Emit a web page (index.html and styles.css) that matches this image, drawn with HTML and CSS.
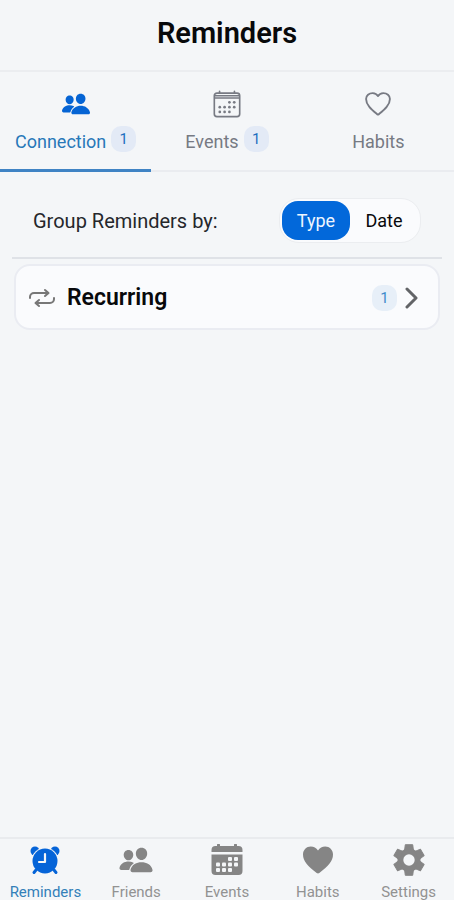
FILE: index.html
```html
<!DOCTYPE html>
<html lang="en">
<head>
<meta charset="utf-8">
<meta name="viewport" content="width=device-width, initial-scale=1">
<title>Reminders</title>
<link rel="stylesheet" href="styles.css">
</head>
<body>
<svg class="sprite" aria-hidden="true">
  <symbol id="people" viewBox="0 0 512 512">
    <path d="M336 256c-20.56 0-40.44-9.18-56-25.84-15.13-16.25-24.37-37.92-26-61-1.74-24.62 5.77-47.26 21.14-63.76S312 80 336 80c23.83 0 45.38 9.06 60.7 25.52 15.47 16.62 23 39.22 21.26 63.63-1.67 23.11-10.9 44.77-26 61C376.44 246.82 356.57 256 336 256zM467.83 432H204.18a27.71 27.71 0 01-22-10.67 30.22 30.22 0 01-5.26-25.79c8.42-33.81 29.28-61.85 60.32-81.08C264.79 297.4 299.86 288 336 288c36.85 0 71 9 98.71 26.05 31.11 19.13 52 47.33 60.38 81.55a30.27 30.27 0 01-5.32 25.78A27.68 27.68 0 01467.83 432zM147 260c-35.19 0-66.13-32.72-69-72.93-1.42-20.6 5-39.65 18-53.62 12.86-13.83 31-21.45 51-21.45s38 7.66 50.93 21.57c13.1 14.08 19.5 33.09 18 53.52-2.87 40.2-33.8 72.91-68.93 72.91zm65.66 31.45c-17.59-8.6-40.42-12.9-65.65-12.9-29.46 0-58.07 7.68-80.57 21.62C40.93 316 23.77 339.05 16.84 366.88a27.39 27.39 0 004.79 23.36A25.32 25.32 0 0041.72 400h111a8 8 0 007.87-6.57c.11-.63.25-1.26.41-1.88 8.48-34.06 28.35-62.84 57.71-83.82a8 8 0 00-.63-13.39c-1.57-.92-3.37-1.89-5.42-2.89z" fill="currentColor"/>
  </symbol>
</svg>

<div class="app">
  <header class="header"><h1>Reminders</h1></header>

  <div class="tabs" role="tablist">
    <button class="tab tab-active" type="button" role="tab" aria-selected="true">
      <svg class="tab-icon" viewBox="16 16 480 480" aria-hidden="true"><use href="#people" width="512" height="512"/></svg>
      <span class="tab-label">Connection <span class="badge badge-raised">1</span></span>
    </button>
    <button class="tab" type="button" role="tab" aria-selected="false">
      <svg class="tab-icon" viewBox="0 0 512 512" fill="none" stroke="currentColor" stroke-width="30" stroke-linecap="round" aria-hidden="true">
        <rect x="24" y="56" width="464" height="432" rx="48"/>
        <path d="M120 24v32M392 24v32M32 106h448M32 146h448"/>
        <g fill="currentColor" stroke="none">
          <circle cx="300" cy="226" r="25"/><circle cx="388" cy="226" r="25"/>
          <circle cx="124" cy="314" r="25"/><circle cx="212" cy="314" r="25"/><circle cx="300" cy="314" r="25"/><circle cx="388" cy="314" r="25"/>
          <circle cx="124" cy="402" r="25"/><circle cx="212" cy="402" r="25"/><circle cx="300" cy="402" r="25"/>
        </g>
      </svg>
      <span class="tab-label">Events <span class="badge badge-raised">1</span></span>
    </button>
    <button class="tab" type="button" role="tab" aria-selected="false">
      <svg class="tab-icon" viewBox="0 0 512 512" fill="none" stroke="currentColor" stroke-width="34" stroke-linejoin="round" aria-hidden="true">
        <path d="M352.92 56C288 56 256 112 256 112s-32-56-96.92-56C92 56 38.500 104 38 164c-1 110 105 195 209 284a16 16 0 0018 0c104-89 210-174 209-284-.5-60-54-108-121.080-108z"/>
      </svg>
      <span class="tab-label">Habits</span>
    </button>
  </div>

  <main class="content">
    <div class="group-by" role="radiogroup" aria-labelledby="group-title">
      <span class="group-title" id="group-title">Group Reminders by:</span>
      <span class="segments">
        <label class="segment"><input type="radio" name="group" value="type" checked><span>Type</span></label>
        <label class="segment"><input type="radio" name="group" value="date"><span>Date</span></label>
      </span>
    </div>

    <button class="card" type="button">
      <svg class="repeat-icon" viewBox="0 0 26 20" fill="none" stroke="currentColor" stroke-width="2" stroke-linecap="round" stroke-linejoin="round" aria-hidden="true">
        <path d="M1 10V9a4 4 0 0 1 4-4h14M16 2l3.500 3L16 8M25 10v1a4 4 0 0 1-4 4H7M10 12l-3.500 3L10 18"/>
      </svg>
      <span class="card-title">Recurring</span>
      <span class="badge badge-light">1</span>
      <svg class="chevron" viewBox="0 0 14 22" fill="none" stroke="currentColor" stroke-width="3" stroke-linecap="round" stroke-linejoin="round" aria-hidden="true">
        <path d="M2 2l9 9-9 9"/>
      </svg>
    </button>
  </main>

  <nav class="bottom-nav" aria-label="Main">
    <a class="nav-item nav-active" href="#reminders" aria-current="page">
      <svg class="nav-icon" viewBox="0 0 32 32" aria-hidden="true">
        <g fill="currentColor">
          <circle cx="6" cy="7" r="4.500"/><circle cx="26" cy="7" r="4.500"/>
        </g>
        <circle cx="16" cy="17" r="13.500" fill="#f4f6f8"/>
        <circle cx="16" cy="17" r="12.500" fill="currentColor"/>
        <path d="M7 26l-2 2.500M25 26l2 2.500" stroke="currentColor" stroke-width="3" stroke-linecap="round"/>
        <path d="M16 10v8h-6" fill="none" stroke="#f4f6f8" stroke-width="2.200" stroke-linecap="round" stroke-linejoin="round"/>
      </svg>
      <span>Reminders</span>
    </a>
    <a class="nav-item" href="#friends">
      <svg class="nav-icon" viewBox="24 24 464 464" overflow="visible" aria-hidden="true"><use href="#people" width="512" height="512"/></svg>
      <span>Friends</span>
    </a>
    <a class="nav-item" href="#events">
      <svg class="nav-icon" viewBox="0 0 32 32" aria-hidden="true">
        <path d="M.5 8V6a4 4 0 0 1 4-4H6V1a1.500 1.500 0 0 1 3 0v1h14V1a1.500 1.500 0 0 1 3 0v1h1.500a4 4 0 0 1 4 4v2zM.5 10.500h31V27a4 4 0 0 1-4 4h-23a4 4 0 0 1-4-4z" fill="currentColor"/>
        <g fill="#f4f6f8">
          <rect x="17" y="13" width="4" height="4" rx="1"/><rect x="23" y="13" width="4" height="4" rx="1"/>
          <rect x="5" y="18.500" width="4" height="4" rx="1"/><rect x="11" y="18.500" width="4" height="4" rx="1"/><rect x="17" y="18.500" width="4" height="4" rx="1"/><rect x="23" y="18.500" width="4" height="4" rx="1"/>
          <rect x="5" y="24" width="4" height="4" rx="1"/><rect x="11" y="24" width="4" height="4" rx="1"/><rect x="17" y="24" width="4" height="4" rx="1"/>
        </g>
      </svg>
      <span>Events</span>
    </a>
    <a class="nav-item" href="#habits">
      <svg class="nav-icon" viewBox="0 0 32 32" aria-hidden="true">
        <path d="M16 29.500a2 2 0 0 1-1.300-.5C6 22.500 1 17 1 10.500 1 6 4.500 2.500 8.800 2.500c3 0 5.500 1.500 7.200 4 1.700-2.500 4.200-4 7.200-4C27.500 2.500 31 6 31 10.500 31 17 26 22.500 17.300 29a2 2 0 0 1-1.300.5z" fill="currentColor"/>
      </svg>
      <span>Habits</span>
    </a>
    <a class="nav-item" href="#settings">
      <svg class="nav-icon" viewBox="-16 -16 32 32" aria-hidden="true">
        <g fill="currentColor" stroke="currentColor" stroke-linejoin="round">
          <circle r="11.500" stroke="none"/>
          <path id="tooth" d="M-4.500-9l.8-6.300h7.400l.8 6.300z"/>
          <use href="#tooth" transform="rotate(60)"/><use href="#tooth" transform="rotate(120)"/><use href="#tooth" transform="rotate(180)"/><use href="#tooth" transform="rotate(240)"/><use href="#tooth" transform="rotate(300)"/>
        </g>
        <circle r="5.700" fill="#f4f6f8"/>
      </svg>
      <span>Settings</span>
    </a>
  </nav>
</div>
</body>
</html>
```
FILE: styles.css
```css
* {
  box-sizing: border-box;
}

body {
  margin: 0;
  background: #f4f6f8;
  color: #08090b;
  font-family: Roboto, "Liberation Sans", sans-serif;
}

button {
  margin: 0;
  border: 0;
  background: none;
  color: inherit;
  font: inherit;
}

.sprite {
  position: absolute;
  width: 0;
  height: 0;
}

.app {
  display: flex;
  flex-direction: column;
  min-height: 100vh;
}

.header {
  padding: 16px 16px 20px;
  border-bottom: 2px solid #ebedf0;
  text-align: center;
}

h1 {
  margin: 0;
  font-size: 29px;
  font-weight: 600;
  line-height: 34px;
}

.tabs {
  display: grid;
  grid-template-columns: repeat(3, 1fr);
}

.tab {
  display: flex;
  flex-direction: column;
  align-items: center;
  gap: 10px;
  padding: 18px 0 14px;
  border-bottom: 2px solid #eaecf0;
  color: #777a83;
}

.tab-active {
  padding-bottom: 13px;
  border-bottom: 3px solid #3f83c4;
  color: #2878b8;
}

.tab-icon {
  width: 28px;
  height: 28px;
}

.tab-active .tab-icon {
  color: #0564d4;
}

.tab-label {
  display: flex;
  gap: 5px;
  font-size: 18px;
  line-height: 28px;
}

.badge {
  width: 25px;
  height: 26px;
  border-radius: 10px;
  background: #e3eaf6;
  color: #1c6fc0;
  font-size: 15px;
  line-height: 26px;
  text-align: center;
}

.badge-raised {
  margin-top: -2px;
}

.badge-light {
  background: #e7eff8;
  color: #3d8bcb;
}

.content {
  flex: 1;
  padding: 0 14px;
}

.group-by {
  display: flex;
  align-items: center;
  justify-content: space-between;
  margin: 0 -2px 5px;
  padding: 26px 21px 14px;
  border-bottom: 2px solid #dfe2e7;
}

.group-title {
  color: #25272b;
  font-size: 20px;
  line-height: 28px;
}

.segments {
  display: flex;
  padding: 2px;
  border: 1px solid #ebedf0;
  border-radius: 20px;
  background: #fafbfd;
}

.segment input {
  position: absolute;
  opacity: 0;
}

.segment span {
  display: block;
  min-width: 68px;
  border-radius: 16px;
  font-size: 18px;
  line-height: 39px;
  text-align: center;
}

.segment input:checked + span {
  background: #0268da;
  color: #edf5ff;
}

.card {
  display: flex;
  align-items: center;
  width: 100%;
  padding: 17px 19px 16px 13px;
  border: 2px solid #eaecf2;
  border-radius: 16px;
  background: #fafbfd;
}

.repeat-icon {
  width: 26px;
  height: 20px;
  color: #777;
}

.card-title {
  flex: 1;
  padding-left: 12px;
  font-size: 23px;
  font-weight: 600;
  line-height: 29px;
  text-align: left;
}

.chevron {
  width: 14px;
  height: 22px;
  margin-left: 8px;
  color: #626467;
}

.bottom-nav {
  display: grid;
  grid-template-columns: repeat(5, 1fr);
  border-top: 2px solid #e9ebee;
}

.nav-item {
  display: flex;
  flex-direction: column;
  align-items: center;
  gap: 6px;
  padding-top: 5px;
  color: #929292;
  font-size: 15px;
  line-height: 20px;
  text-decoration: none;
}

.nav-item span {
  height: 18px;
}

.nav-icon {
  width: 32px;
  height: 32px;
  color: #858585;
}

.nav-active {
  color: #3380b8;
}

.nav-active .nav-icon {
  color: #0564d8;
}
```
